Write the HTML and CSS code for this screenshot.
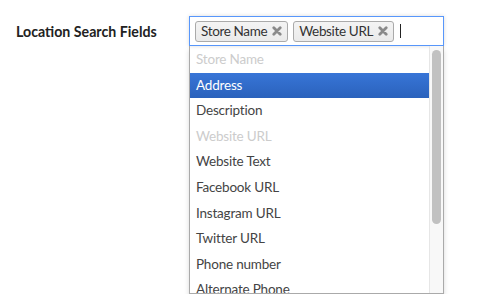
FILE: index.html
```html
<!DOCTYPE html>
<html lang="en">
  <head>
    <meta charset="UTF-8" />
    <meta name="viewport" content="width=device-width, initial-scale=1.0" />
    <title>Location Search Fields</title>
    <link rel="stylesheet" href="styles.css">
  </head>
  <body>
    <div class="field-row">
      <label class="field-label">Location Search Fields</label>

      <div class="chosen">
        <ul class="choices">
          <li class="choice">
            <span>Store Name</span>
            <svg class="choice-close" viewBox="0 0 10 10" width="10" height="10">
              <path d="M1.8 1.8 L8.2 8.2 M8.2 1.8 L1.8 8.2" />
            </svg>
          </li>
          <li class="choice">
            <span>Website URL</span>
            <svg class="choice-close" viewBox="0 0 10 10" width="10" height="10">
              <path d="M1.8 1.8 L8.2 8.2 M8.2 1.8 L1.8 8.2" />
            </svg>
          </li>
          <li class="search-field"><span class="caret"></span></li>
        </ul>

        <div class="drop">
          <ul class="results">
            <li class="result disabled">Store Name</li>
            <li class="result highlighted">Address</li>
            <li class="result">Description</li>
            <li class="result disabled">Website URL</li>
            <li class="result">Website Text</li>
            <li class="result">Facebook URL</li>
            <li class="result">Instagram URL</li>
            <li class="result">Twitter URL</li>
            <li class="result">Phone number</li>
            <li class="result">Alternate Phone</li>
          </ul>
          <div class="scrollbar">
            <div class="thumb"></div>
          </div>
        </div>
      </div>
    </div>
  </body>
</html>
```

FILE: styles.css
```css
body {
  margin: 0;
  background: #fff;
  font-family: Lato, "Noto Sans", sans-serif;
  font-size: 13.5px;
  color: #333;
}
ul {
  list-style: none;
  margin: 0;
  padding: 0;
}
.field-row {
  display: flex;
  align-items: flex-start;
  padding: 16px 0 0 16px;
}
.field-label {
  width: 173px;
  padding-top: 7px;
  font-weight: bold;
  font-size: 14.2px;
  color: #222;
}
.chosen {
  width: 255px;
}
.choices {
  display: flex;
  align-items: center;
  gap: 5px;
  height: 28px;
  padding: 0 5px;
  border: 1px solid #5897fb;
  box-shadow: 0 0 4px rgba(0, 0, 0, 0.15);
}
.choice {
  display: flex;
  align-items: center;
  gap: 5px;
  height: 19px;
  padding: 0 5px;
  border: 1px solid #aaa;
  border-radius: 3px;
  background: linear-gradient(#f4f4f4, #eaeaea);
  color: #333;
  letter-spacing: -0.35px;
}
.choice-close {
  stroke: #8a8a8a;
  stroke-width: 2.8;
  stroke-linecap: round;
}
.search-field {
  display: flex;
  align-items: center;
  padding-left: 1px;
}
.caret {
  width: 1px;
  height: 14px;
  background: #222;
}
.drop {
  display: flex;
  height: 247px;
  border: 1px solid #aaa;
  border-top: 0;
  box-shadow: 0 4px 5px rgba(0, 0, 0, 0.15);
  overflow: hidden;
}
.results {
  flex: 1;
  padding-top: 1px;
  overflow: hidden;
}
.result {
  padding: 4px 6px;
  line-height: 17.6px;
  color: #444;
  letter-spacing: -0.2px;
}
.result.disabled {
  color: #ccc;
}
.result.highlighted {
  color: #fff;
  background: linear-gradient(#3875d7, #2a62bc);
}
.scrollbar {
  box-sizing: border-box;
  width: 14px;
  border-left: 1px solid #e6e6e6;
  background: #f8f8f8;
  padding: 4px 2px 0;
}
.thumb {
  height: 174px;
  border-radius: 5px;
  background: #c1c1c1;
}
```
